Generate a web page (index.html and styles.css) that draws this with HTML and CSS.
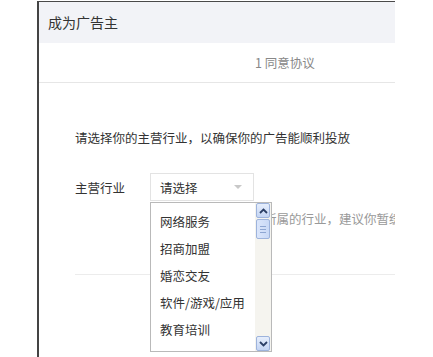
FILE: index.html
```html
<!DOCTYPE html>
<html lang="zh-CN">
<head>
<meta charset="utf-8">
<title>成为广告主</title>
<link rel="stylesheet" href="styles.css">
</head>
<body>
<div class="frame">
  <div class="header">成为广告主</div>
  <div class="steps"><span class="step">1 同意协议</span></div>
  <div class="content">
    <p class="intro">请选择你的主营行业，以确保你的广告能顺利投放</p>
    <div class="form-row">
      <span class="label">主营行业</span>
      <div class="select">
        <span>请选择</span>
        <span class="caret"></span>
      </div>
    </div>
    <p class="hint">如果列表中没有你所属的行业，建议你暂缓投放</p>
    <div class="sep"></div>
  </div>

  <div class="dropdown">
    <ul class="options">
      <li>网络服务</li>
      <li>招商加盟</li>
      <li>婚恋交友</li>
      <li>软件/游戏/应用</li>
      <li>教育培训</li>
      <li>医疗健康</li>
    </ul>
    <div class="scrollbar">
      <div class="sb-btn">
        <svg width="9" height="6" viewBox="0 0 9 6"><path d="M1 5 L4.5 1.5 L8 5" fill="none" stroke="#2b3f66" stroke-width="1.8"/></svg>
      </div>
      <div class="sb-thumb">
        <span></span><span></span><span></span>
      </div>
      <div class="sb-track"></div>
      <div class="sb-btn">
        <svg width="9" height="6" viewBox="0 0 9 6"><path d="M1 1 L4.5 4.5 L8 1" fill="none" stroke="#2b3f66" stroke-width="1.8"/></svg>
      </div>
    </div>
  </div>
</div>
</body>
</html>
```
FILE: styles.css
```css
html, body {
  margin: 0;
  padding: 0;
  background: #fff;
}
body {
  font-family: "Noto Sans CJK SC", "Noto Sans", sans-serif;
  font-size: 12.5px;
  color: #333;
}
.frame {
  position: relative;
  margin: 1px 0 0 37px;
  width: 356px;
  height: 356px;
  border-left: 2px solid #444;
  border-top: 1px solid #4a4a4a;
  overflow: hidden;
  box-sizing: content-box;
}
.header {
  height: 41px;
  background: #f2f3f7;
  padding: 0 0 2px 9px;
  box-sizing: border-box;
  display: flex;
  align-items: center;
  font-size: 14px;
  color: #333;
}
.steps {
  height: 40px;
  border-bottom: 1px solid #e6e6e6;
  box-sizing: border-box;
  display: flex;
  align-items: center;
  padding-left: 216px;
}
.step {
  color: #888;
  font-size: 12.5px;
  white-space: pre;
}
.content {
  padding-left: 36px;
}
.intro {
  margin: 45px 0 0;
  line-height: 20px;
  white-space: nowrap;
}
.form-row {
  display: flex;
  align-items: center;
  margin-top: 25px;
}
.label {
  width: 75px;
}
.select {
  width: 104px;
  height: 28px;
  box-sizing: border-box;
  border: 1px solid #e3e3e3;
  display: flex;
  align-items: center;
  justify-content: space-between;
  padding: 0 11px 0 9px;
}
.caret {
  width: 0;
  height: 0;
  border-left: 4px solid transparent;
  border-right: 4px solid transparent;
  border-top: 4px solid #c8c8c8;
}
.hint {
  margin: 8px 0 0 89px;
  line-height: 20px;
  color: #999;
  white-space: nowrap;
}
.sep {
  margin-top: 45px;
  border-top: 1px solid #ececec;
}
.dropdown {
  position: absolute;
  left: 111px;
  top: 200px;
  width: 122px;
  height: 150px;
  box-sizing: border-box;
  border: 1px solid #b9b9b9;
  background: #fff;
  display: flex;
  overflow: hidden;
}
.options {
  list-style: none;
  margin: 0;
  padding: 5px 0 0 9px;
  flex: 1;
  min-width: 0;
}
.options li {
  height: 27px;
  line-height: 27px;
  white-space: nowrap;
  color: #333;
}
.scrollbar {
  width: 16px;
  display: flex;
  flex-direction: column;
  background: #f5f4ef;
}
.sb-btn {
  height: 15px;
  margin: 0 1px;
  box-sizing: border-box;
  border: 1px solid #9db3dc;
  border-radius: 2px;
  background: linear-gradient(#e6eefc, #c4d5f4);
  display: flex;
  align-items: center;
  justify-content: center;
}
.sb-thumb {
  height: 20px;
  margin: 1px 1px 0;
  box-sizing: border-box;
  border: 1px solid #9db3dc;
  border-radius: 2px;
  background: linear-gradient(90deg, #dbe6fb, #c9d9f6);
  display: flex;
  flex-direction: column;
  align-items: center;
  justify-content: center;
  gap: 2px;
}
.sb-thumb span {
  width: 6px;
  height: 1px;
  background: #8ea6d2;
}
.sb-track {
  flex: 1;
}
```
